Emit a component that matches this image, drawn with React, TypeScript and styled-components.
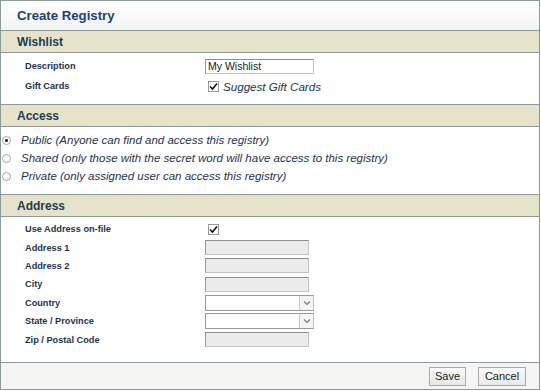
import React from "react";
import styled, { createGlobalStyle } from "styled-components";

const GlobalStyle = createGlobalStyle`
  body {
    margin: 0;
    background: #ffffff;
    font-family: "Liberation Sans", Arial, sans-serif;
  }
`;

const Panel = styled.div`
  width: 540px;
  height: 390px;
  box-sizing: border-box;
  border: 1px solid #8c9a9a;
  display: flex;
  flex-direction: column;
  background: #fff;
`;

const TitleBar = styled.div`
  height: 29px;
  display: flex;
  align-items: center;
  padding-left: 16px;
  background: linear-gradient(#ffffff, #f3f4f4);
  color: #22407c;
  font-size: 13.2px;
  font-weight: bold;
`;

const SectionHeader = styled.div`
  height: 21px;
  display: flex;
  align-items: center;
  padding-left: 16px;
  background: #e7e3cb;
  border-top: 1px solid #8c9a9a;
  border-bottom: 1px solid #8c9a9a;
  color: #1c3c58;
  font-size: 12px;
  font-weight: bold;
`;

const FormGrid = styled.div<{ $top: number; $bottom: number; $row: number }>`
  display: grid;
  grid-template-columns: 180px 1fr;
  grid-auto-rows: ${(p) => p.$row}px;
  align-items: center;
  padding: ${(p) => p.$top}px 0 ${(p) => p.$bottom}px 24px;
`;

const Label = styled.div`
  font-size: 9.2px;
  font-weight: bold;
  color: #1d3550;
`;

const TextInput = styled.div<{ $disabled?: boolean; $width: number }>`
  width: ${(p) => p.$width}px;
  height: 15px;
  box-sizing: border-box;
  border: 1px solid #c4c4c4;
  border-top-color: #8e8e8e;
  border-left-color: #9a9a9a;
  background: ${(p) => (p.$disabled ? "#ececec" : "#ffffff")};
  font-size: 10.5px;
  line-height: 13px;
  padding-left: 2px;
  color: #222;
`;

const SelectBox = styled.div`
  width: 109px;
  height: 16px;
  box-sizing: border-box;
  border: 1px solid #9a9a9a;
  border-right-color: #c4c4c4;
  background: #fff;
  display: flex;
  justify-content: flex-end;
`;

const SelectArrow = styled.div`
  width: 14px;
  height: 14px;
  box-sizing: border-box;
  border-left: 1px solid #c8c8c8;
  background: #f4f4f4;
  display: flex;
  align-items: center;
  justify-content: center;
`;

const CheckLine = styled.div`
  display: flex;
  align-items: center;
  gap: 4px;
  padding-left: 3px;
`;

const CheckBoxMark = styled.span`
  width: 11px;
  height: 11px;
  box-sizing: border-box;
  border: 1px solid #9a9a9a;
  background: #fff;
  display: inline-flex;
  align-items: center;
  justify-content: center;
`;

const OptionText = styled.span<{ $size: number }>`
  font-size: ${(p) => p.$size}px;
  font-style: italic;
  color: #1d3550;
`;

const RadioList = styled.div`
  display: flex;
  flex-direction: column;
  padding: 4px 0 9px 1px;
`;

const RadioRow = styled.div`
  height: 18px;
  display: flex;
  align-items: center;
  gap: 10px;
`;

const RadioDot = styled.span<{ $checked?: boolean }>`
  width: 9px;
  height: 9px;
  box-sizing: border-box;
  border-radius: 50%;
  border: 1px solid #a6a6a6;
  background: #fff;
  display: inline-flex;
  align-items: center;
  justify-content: center;
  &::after {
    content: "";
    width: 3px;
    height: 3px;
    border-radius: 50%;
    background: ${(p) => (p.$checked ? "#111" : "transparent")};
  }
`;

const Spacer = styled.div`
  flex: 1;
`;

const Footer = styled.div`
  height: 26px;
  border-top: 1px solid #8c9a9a;
  background: #f5f5f3;
  display: flex;
  align-items: center;
  justify-content: flex-end;
  gap: 12px;
  padding-right: 13px;
`;

const Button = styled.button<{ $width: number }>`
  width: ${(p) => p.$width}px;
  height: 19px;
  padding: 0;
  font-family: "Liberation Sans", Arial, sans-serif;
  font-size: 11px;
  color: #222;
  background: linear-gradient(#fbfbfb, #e9e9e9);
  border: 1px solid #a8a8a8;
  border-radius: 0;
`;

const Check = () => (
  <svg width="9" height="9" viewBox="0 0 9 9">
    <path d="M1 4.5 L3.5 7 L8 1.5" fill="none" stroke="#111" strokeWidth="1.6" />
  </svg>
);

const Chevron = () => (
  <svg width="8" height="6" viewBox="0 0 8 6">
    <path d="M1 1.5 L4 4.5 L7 1.5" fill="none" stroke="#777" strokeWidth="1.1" />
  </svg>
);

const addressFields = [
  { label: "Address 1", kind: "text" },
  { label: "Address 2", kind: "text" },
  { label: "City", kind: "text" },
  { label: "Country", kind: "select" },
  { label: "State / Province", kind: "select" },
  { label: "Zip / Postal Code", kind: "text" },
];

const accessOptions = [
  { text: "Public (Anyone can find and access this registry)", checked: true },
  { text: "Shared (only those with the secret word will have access to this registry)", checked: false },
  { text: "Private (only assigned user can access this registry)", checked: false },
];

function App() {
  return (
    <>
      <GlobalStyle />
      <Panel>
        <TitleBar>Create Registry</TitleBar>

        <SectionHeader>Wishlist</SectionHeader>
        <FormGrid $top={3} $bottom={8} $row={20}>
          <Label>Description</Label>
          <TextInput $width={109}>My Wishlist</TextInput>
          <Label>Gift Cards</Label>
          <CheckLine>
            <CheckBoxMark>
              <Check />
            </CheckBoxMark>
            <OptionText $size={11.6}>Suggest Gift Cards</OptionText>
          </CheckLine>
        </FormGrid>

        <SectionHeader>Access</SectionHeader>
        <RadioList>
          {accessOptions.map((o) => (
            <RadioRow key={o.text}>
              <RadioDot $checked={o.checked} />
              <OptionText $size={11.5}>{o.text}</OptionText>
            </RadioRow>
          ))}
        </RadioList>

        <SectionHeader>Address</SectionHeader>
        <FormGrid $top={3} $bottom={0} $row={18.4}>
          <Label>Use Address on-file</Label>
          <CheckLine>
            <CheckBoxMark>
              <Check />
            </CheckBoxMark>
          </CheckLine>
          {addressFields.map((f) => (
            <React.Fragment key={f.label}>
              <Label>{f.label}</Label>
              {f.kind === "select" ? (
                <SelectBox>
                  <SelectArrow>
                    <Chevron />
                  </SelectArrow>
                </SelectBox>
              ) : (
                <TextInput $disabled $width={104} />
              )}
            </React.Fragment>
          ))}
        </FormGrid>
        <Spacer />

        <Footer>
          <Button $width={37}>Save</Button>
          <Button $width={48}>Cancel</Button>
        </Footer>
      </Panel>
    </>
  );
}

export default App;
